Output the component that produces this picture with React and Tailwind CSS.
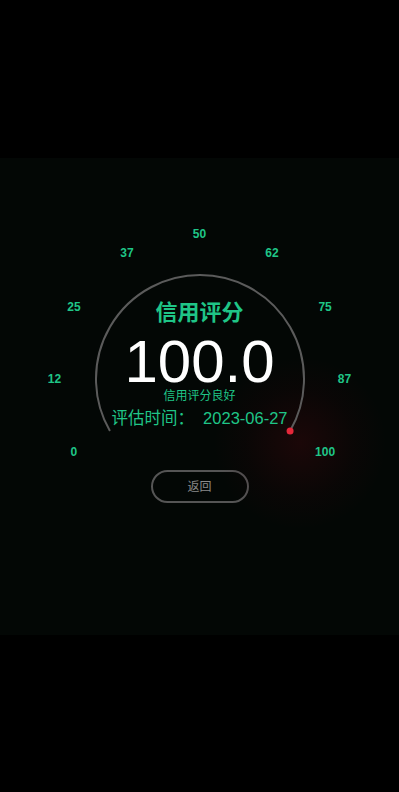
import React from "react";

const labels = [0, 12, 25, 37, 50, 62, 75, 87, 100];

// gauge geometry (container 300x300, center 150,150)
const R_ARC = 104;
const R_LABEL = 145;

const polar = (r, deg) => {
  const a = (deg * Math.PI) / 180;
  return [150 + r * Math.cos(a), 150 - r * Math.sin(a)];
};

export default function App() {
  const [sx, sy] = polar(R_ARC, 210);
  const [ex, ey] = polar(R_ARC, -30);
  const arc = `M ${sx} ${sy} A ${R_ARC} ${R_ARC} 0 1 1 ${ex} ${ey}`;

  return (
    <div className="w-full min-h-[792px] bg-black" style={{ fontFamily: '"Liberation Sans", "Noto Sans CJK SC", sans-serif' }}>
      <div className="h-[158px] bg-black" />
      <section className="relative h-[477px] overflow-hidden bg-[#030705] pt-[71px]">
        <div className="pointer-events-none absolute left-[215px] top-[200px] h-[170px] w-[170px] rounded-full bg-[radial-gradient(circle,rgba(90,8,16,0.28)_0%,rgba(50,4,10,0.14)_45%,rgba(0,0,0,0)_72%)]" />
        <div className="relative mx-auto h-[300px] w-[300px]">
          <svg className="absolute inset-0" width="300" height="300" viewBox="0 0 300 300">
            <path d={arc} fill="none" stroke="#5b5b5b" strokeWidth="2" />
            <circle cx={ex} cy={ey} r="3.5" fill="#e5283a" />
          </svg>
          {labels.map((v, i) => {
            const [x, y] = polar(R_LABEL, 210 - i * 30);
            return (
              <span
                key={v}
                className="absolute -translate-x-1/2 -translate-y-1/2 text-[12px] font-bold leading-[14px] text-[#1fc587]"
                style={{ left: x, top: y }}
              >
                {v}
              </span>
            );
          })}
          <div className="relative flex flex-col items-center pt-[71px]">
            <h1 className="text-[22px] font-bold leading-[26px] text-[#1fc587]">信用评分</h1>
            <p className="mt-[13px] text-[60px] leading-[46px] text-white">100.0</p>
            <p className="mt-[5px] text-[12px] leading-[12px] text-[#1fc587]">信用评分良好</p>
            <p className="mt-[6px] text-[16.5px] leading-[20px] text-[#1fc587]">评估时间：&nbsp;&nbsp;2023-06-27</p>
          </div>
        </div>
        <div className="flex justify-center -mt-[59px]">
          <button className="h-[33px] w-[98px] rounded-full border-2 border-[#555555] text-[12px] text-[#8a8a8a]">返回</button>
        </div>
      </section>
      <div className="h-[157px] bg-black" />
    </div>
  );
}
